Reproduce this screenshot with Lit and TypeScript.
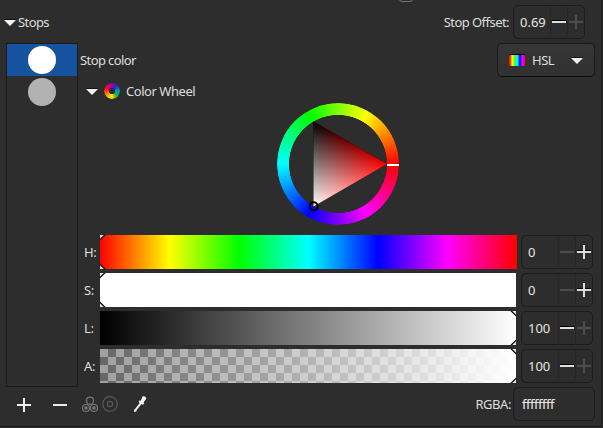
import { LitElement, html, css } from "lit";
import { customElement, property } from "lit/decorators.js";
import { classMap } from "lit/directives/class-map.js";

@customElement("spin-box")
class SpinBox extends LitElement {
  @property() value = "0";
  @property({ type: Boolean }) noMinus = false;
  @property({ type: Boolean }) noPlus = false;

  static styles = css`
    :host { display: block; width: 72px; height: 34px; flex: none; letter-spacing: 0; }
    .box { box-sizing: border-box; height: 34px; border: 1px solid #1c1c1c; border-radius: 5px;
      display: grid; grid-template-columns: 36px 17px 17px; background: #2d2d2d; }
    .val { padding-left: 6px; line-height: 33px; color: #e6e6e3; white-space: nowrap; }
    .btn { border-left: 1px solid #272727; display: block; }
    svg { display: block; width: 16px; height: 32px; }
    .on { fill: #dededb; }
    .off { fill: #4d4d4d; }
    .shade { fill: #000; }
    .off-shade { fill: none; }
  `;

  render() {
    const minus = classMap({ on: !this.noMinus, off: this.noMinus });
    const minusShade = classMap({ shade: !this.noMinus, "off-shade": this.noMinus });
    const plus = classMap({ on: !this.noPlus, off: this.noPlus });
    const plusShade = classMap({ shade: !this.noPlus, "off-shade": this.noPlus });
    return html`<div class="box">
      <span class="val">${this.value}</span>
      <span class="btn"><svg viewBox="0 0 16 32"><path class=${minusShade} d="M1 14h14v1H1z" /><path class=${minus} d="M1 15h14v2H1z" /></svg></span>
      <span class="btn"><svg viewBox="0 0 16 32"><path class=${plusShade} d="M1 14h14v1H1zM7 8h2v1H7z" /><path class=${plus} d="M1 15h14v2H1zM7 9h2v14H7z" /></svg></span>
    </div>`;
  }
}

@customElement("color-slider")
class ColorSlider extends LitElement {
  @property() kind = "h";
  @property() end = "left";

  static styles = css`
    :host { display: block; height: 34px; }
    .bar { height: 34px; width: 416px; display: flex; flex-direction: column; justify-content: space-between; }
    .bar.right { align-items: flex-end; }
    .bar.h { width: 417px; background: linear-gradient(90deg, #f00, #ff0, #0f0, #0ff, #00f, #f0f, #f00); }
    .s { background: #fff; }
    .l { background: linear-gradient(90deg, #000, #fff); }
    .a { background: linear-gradient(90deg, rgba(255,255,255,0), #fff),
      repeating-conic-gradient(#666 0 25%, #a0a0a0 0 50%) 0 0 / 16px 16px; }
    svg { display: block; width: 6px; height: 6px; }
    .right svg { transform: scaleX(-1); }
    svg.low { transform: scaleY(-1); }
    .right svg.low { transform: scale(-1, -1); }
  `;

  render() {
    const mark = (low: boolean) => html`<svg class=${low ? "low" : ""} viewBox="0 0 6 6">
      <path d="M0 0H5.6L0 5.6z" fill="#000" /><path d="M0 0H3.8L0 3.8z" fill="#e4e4e4" /></svg>`;
    return html`<div class="bar ${this.kind} ${this.end}">${mark(false)}${mark(true)}</div>`;
  }
}

@customElement("app-root")
class AppRoot extends LitElement {
  static styles = css`
    :host { display: block; }
    .panel { box-sizing: border-box; position: relative; width: 603px; height: 428px; overflow: hidden; background: #2d2d2d;
      color: #dededb; font: 13px "Noto Sans", sans-serif; display: flex; flex-direction: column; }
    .edge { position: absolute; left: 0; top: 0; width: 601px; height: 426px; border-right: 1px solid #1b1b1b; border-bottom: 1px solid #1b1b1b; pointer-events: none; }
    .peek { position: absolute; left: 399px; top: -10px; width: 12px; height: 10px; border: 1px solid #777; border-radius: 3px; }
    .head { box-sizing: border-box; height: 43px; padding: 5px 18px 4px 4px; display: flex; align-items: center; }
    .head svg { margin-right: 2px; }
    .t { letter-spacing: -0.6px; }
    .o { letter-spacing: -0.55px; }
    .w { letter-spacing: -0.45px; }
    .grow { flex: 1; }
    .head spin-box { margin-left: 4px; }
    .main { display: flex; height: 344px; padding-left: 6px; }
    .list { box-sizing: border-box; width: 72px; border: 1px solid #1a1a1a; flex: none; }
    .row { height: 32px; display: flex; justify-content: center; align-items: center; }
    .sel { background: #15539e; }
    .dot { width: 28px; height: 28px; border-radius: 50%; background: #fff; }
    .grey { background: #b2b2b2; }
    .body { flex: 1; }
    .kindrow { height: 34px; display: flex; align-items: center; padding: 0 8px 0 2px; }
    .combo { box-sizing: border-box; width: 98px; height: 34px; border: 1px solid #1a1a1a; border-bottom-color: #0c0c0c; border-radius: 5px;
      background: linear-gradient(#363636, #313131); display: flex; align-items: center; padding: 0 11px; }
    .combo span { flex: 1; margin-left: 7px; }
    .wheelhead { height: 28px; display: flex; align-items: center; padding-left: 8px; }
    .ic { width: 16px; height: 16px; margin: 0 6px; border-radius: 50%;
      background: conic-gradient(#9b00b4, #3a1fc0 30deg, #0a58d8 60deg, #0a98cc 90deg, #0aa860 120deg, #66c010 150deg, #f2ee00 180deg, #ffc400 210deg, #ff8400 240deg, #ff3c00 270deg, #f40030 300deg, #cc0070 330deg, #9b00b4);
      mask: radial-gradient(circle, transparent 2.9px, #000 3.5px); }
    .wheel { height: 124px; display: flex; justify-content: flex-start; padding: 0 0 0 199px; box-sizing: border-box; align-items: flex-start; }
    .disc { width: 122px; height: 122px; margin-top: -2px; display: grid; isolation: isolate; }
    .disc > * { grid-area: 1 / 1; }
    .ring { border-radius: 50%; background: conic-gradient(from 90deg, #f00, #f0f, #00f, #0ff, #0f0, #ff0, #f00);
      mask: radial-gradient(circle, transparent 48.7px, #000 49.3px); }
    .blend { mix-blend-mode: screen; }
    .tri { isolation: isolate; }
    .sliders { display: grid; grid-template-columns: 16px 421px 72px; row-gap: 4px; padding-left: 6px; margin-top: 6px; }
    .sliders .lab { line-height: 34px; letter-spacing: -0.3px; }
    .foot { height: 34px; display: flex; align-items: center; padding: 0 8px 0 16px; }
    .entry { box-sizing: border-box; width: 82px; height: 34px; border: 1px solid #1c1c1c; border-radius: 5px; margin-left: 2px; padding-left: 8px; line-height: 33px; color: #eee; letter-spacing: -0.48px; }
    svg { display: block; flex: none; }
  `;

  arrow() {
    return html`<svg width="12" height="7" viewBox="0 0 12 7"><path d="M0 0H12V1H0z" fill="#111" /><path d="M0 1H12L6 7z" fill="#f2f2ef" /></svg>`;
  }

  render() {
    return html`<div class="panel">
      <div class="peek"></div>
      <div class="head">
        ${this.arrow()}<span class="t">Stops</span><span class="grow"></span>
        <span class="o">Stop Offset:</span><spin-box value="0.69" noPlus></spin-box>
      </div>
      <div class="main">
        <div class="list">
          <div class="row sel"><div class="dot"></div></div>
          <div class="row"><div class="dot grey"></div></div>
        </div>
        <div class="body">
          <div class="kindrow">
            <span class="t">Stop color</span><span class="grow"></span>
            <div class="combo">
              <svg width="16" height="12" viewBox="0 0 16 12">
                <defs><linearGradient id="spec">
                  <stop offset="0" stop-color="#f00" /><stop offset=".1" stop-color="#f40" /><stop offset=".2" stop-color="#ff0" /><stop offset=".38" stop-color="#3f3" />
                  <stop offset=".52" stop-color="#0ff" /><stop offset=".68" stop-color="#01f" /><stop offset=".84" stop-color="#e0f" /><stop offset="1" stop-color="#f03" />
                </linearGradient></defs>
                <rect width="16" height="3" rx="1" fill="#000" /><rect y="1" width="16" height="11" rx="1" fill="url(#spec)" />
              </svg>
              <span class="w">HSL</span>${this.arrow()}
            </div>
          </div>
          <div class="wheelhead">${this.arrow()}<div class="ic"></div><span class="w">Color Wheel</span></div>
          <div class="wheel">
            <div class="disc">
              <div class="ring"></div>
              <svg class="tri" width="122" height="122" viewBox="0 0 122 122">
                <defs>
                  <linearGradient id="r" gradientUnits="userSpaceOnUse" x1="36.5" y1="18.5" x2="73.25" y2="82.25"><stop stop-color="#000" /><stop offset="1" stop-color="#f00" /></linearGradient>
                  <linearGradient id="c" gradientUnits="userSpaceOnUse" x1="36.5" y1="103.5" x2="73.25" y2="39.75"><stop stop-color="#0ff" /><stop offset="1" stop-color="#000" /></linearGradient>
                </defs>
                <path d="M36.5 18.5L110 61L36.5 103.5z" fill="url(#r)" />
                <path class="blend" d="M36.5 18.5L110 61L36.5 103.5z" fill="url(#c)" />
                <path d="M110 61h12v2h-12z" fill="#fff" />
                <circle cx="36.7" cy="103.2" r="4" fill="none" stroke="#000" stroke-width="2" />
              </svg>
            </div>
          </div>
          <div class="sliders">
            <span class="lab">H:</span><color-slider kind="h"></color-slider><spin-box value="0" noMinus></spin-box>
            <span class="lab">S:</span><color-slider kind="s"></color-slider><spin-box value="0" noMinus></spin-box>
            <span class="lab">L:</span><color-slider kind="l" end="right"></color-slider><spin-box value="100" noPlus></spin-box>
            <span class="lab">A:</span><color-slider kind="a" end="right"></color-slider><spin-box value="100" noPlus></spin-box>
          </div>
        </div>
      </div>
      <div class="foot">
        <svg width="132" height="34" viewBox="16 387 132 34">
          <path d="M17 404H31V406H17zM23 398H25V412H23zM53 404H67V406H53z" fill="#eeeeec" />
          <g fill="none" stroke="#777" stroke-width="1.2">
            <circle cx="90" cy="400.7" r="3.5" /><circle cx="86" cy="408" r="3.5" /><circle cx="94" cy="408" r="3.5" />
            <circle cx="86" cy="408" r="1.2" fill="#777" /><circle cx="94" cy="408" r="1.2" fill="#777" />
          </g>
          <g fill="none" stroke="#5a5a5a" stroke-width="1.2"><circle cx="110" cy="404" r="7.3" /><circle cx="110" cy="404" r="2.6" /></g>
          <path d="M142.500 396.500c1.600-1 4.200.5 3.600 2.600l-2.400 3.200.6 1.200-1.500 1.300-1.200-.8-4.800 5.700-.6 1.900-2 .4-.3-2 1.400-1.300 4.400-5.800-1.200-.9 1.100-1.500 1.300.1z" fill="#f2f2f0" />
        </svg>
        <span class="grow"></span><span class="w">RGBA:</span><div class="entry">ffffffff</div>
      </div>
      <div class="edge"></div>
    </div>`;
  }
}
